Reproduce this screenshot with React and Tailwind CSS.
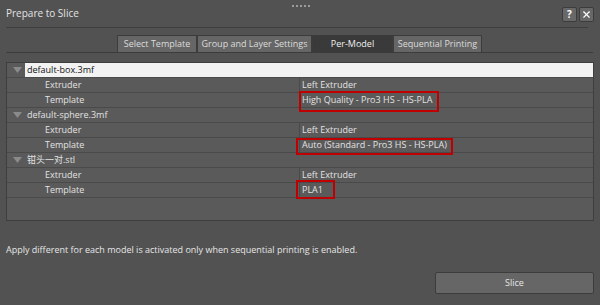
import { X } from 'lucide-react';

const font = { fontFamily: '"Open Sans", "Noto Sans CJK SC", sans-serif' };

const tabs = [
    { label: 'Select Template', w: 'w-[80px]' },
    { label: 'Group and Layer Settings', w: 'w-[115px]' },
    { label: 'Per-Model', w: 'w-[81px]', active: true },
    { label: 'Sequential Printing', w: 'w-[89px]' },
];

const models = [
    { name: 'default-box.3mf', template: 'High Quality - Pro3 HS - HS-PLA', selected: true, box: 'left-[-1px] top-[-2px] h-[21px] w-[140px]' },
    { name: 'default-sphere.3mf', template: 'Auto (Standard - Pro3 HS - HS-PLA)', box: 'left-[-4px] top-0 h-[17px] w-[157px]' },
    { name: '钳头一对.stl', template: 'PLA1', box: 'left-[-4px] top-[-3px] h-[19px] w-[39px]' },
];

function Arrow() {
    return (
        <svg width="9" height="6" viewBox="0 0 9 6" className="shrink-0">
            <path d="M0 0 L9 0 L4.5 6 Z" fill="#8a8a8a" />
        </svg>
    );
}

function PropRow({ label, value, box }) {
    return (
        <div className="flex h-[15px] border-b border-[#4a4a4a] text-[9px] leading-[14px] text-[#e2e2e2]">
            <div className="w-[292px] pl-[38px]">{label}</div>
            <div className="relative flex-1 border-l border-[#4a4a4a] pl-[2px]">
                {value}
                {box && <div className={`absolute border-2 border-[#c00000] ${box}`} />}
            </div>
        </div>
    );
}

export default function App() {
    return (
        <div className="flex h-[305px] w-[600px] flex-col bg-[#525252] text-[#e2e2e2]" style={font}>
            {/* Title bar */}
            <div className="relative flex h-[27px] items-center px-[6px]">
                <span className="text-[10px]">Prepare to Slice</span>
                <div className="absolute left-[292px] top-[5px] flex gap-[2px]">
                    {[1, 2, 3, 4, 5].map(n => (
                        <div key={n} className="h-[2px] w-[2px] bg-[#9a9a9a]" />
                    ))}
                </div>
                <div className="ml-auto flex gap-[2px] pt-[1px]">
                    <div className="flex h-[15px] w-[15px] items-center justify-center rounded-[2px] border border-[#3c3c3c] bg-[#686868] text-[10px] font-bold text-white">?</div>
                    <div className="flex h-[15px] w-[15px] items-center justify-center rounded-[2px] border border-[#3c3c3c] bg-[#686868] text-white">
                        <X size={11} strokeWidth={2.5} />
                    </div>
                </div>
            </div>
            <div className="mx-[6px] mr-[12px] h-px bg-[#3e3e3e]" />

            {/* Tabs */}
            <div className="mt-[7px] flex justify-center pr-px">
                {tabs.map(t => (
                    <div
                        key={t.label}
                        className={`flex h-[17px] items-center justify-center whitespace-nowrap border border-b-0 border-[#3c3c3c] text-[9px] ${t.w} ${t.active ? 'bg-[#3a3a3a] text-[#f0f0f0]' : 'bg-[#666666] text-[#dcdcdc]'}`}
                    >
                        {t.label}
                    </div>
                ))}
            </div>
            <div className="mx-[6px] mr-[7px] h-px bg-[#3c3c3c]" />

            {/* Tree */}
            <div className="mx-[6px] mt-[9px] h-[159px] border border-[#3e3e3e] bg-[#5a5a5a]">
                {models.map(m => (
                    <div key={m.name}>
                        <div className="flex h-[15px] items-center border-b border-[#4a4a4a]">
                            <div className="flex w-[18px] justify-center pl-[2px]"><Arrow /></div>
                            <div className={`flex h-full flex-1 items-center pl-[2px] text-[9px] ${m.selected ? 'bg-[#f2f2f2] text-[#111]' : 'text-[#e2e2e2]'}`}>
                                {m.name}
                            </div>
                        </div>
                        <PropRow label="Extruder" value="Left Extruder" />
                        <PropRow label="Template" value={m.template} box={m.box} />
                    </div>
                ))}
            </div>

            {/* Footer */}
            <div className="mt-[22px] px-[6px] text-[9px] text-[#e6e6e6]">
                Apply different for each model is activated only when sequential printing is enabled.
            </div>
            <div className="mt-auto mb-[11px] flex justify-end px-[6px]">
                <button className="h-[22px] w-[159px] rounded-[2px] border border-[#3c3c3c] bg-[#666666] text-[9px] text-[#e6e6e6]">
                    Slice
                </button>
            </div>
        </div>
    );
}
